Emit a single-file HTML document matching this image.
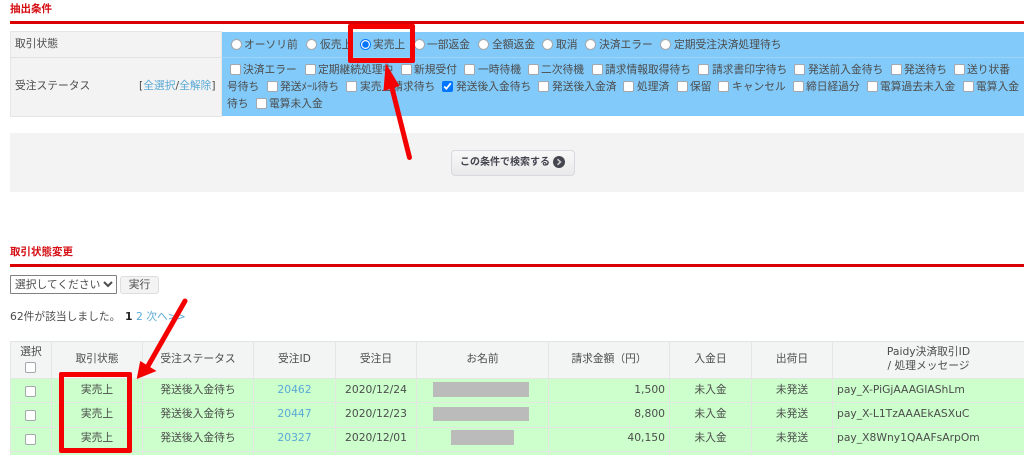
<!DOCTYPE html>
<html lang="ja"><head><meta charset="utf-8"><style>
html,body{margin:0;padding:0;background:#fff}
body{width:1024px;height:455px;overflow:hidden;position:relative;font:10.75px/14px "DejaVu Sans","Noto Sans CJK JP",sans-serif;color:#4c4c4c;filter:blur(.35px)}
div,span,input,select{position:absolute;white-space:nowrap;box-sizing:border-box}
input{margin:0;width:11px;height:11px;transform:translate(1px,1px)}
input:not(:checked){appearance:none;-webkit-appearance:none;background:#fff;border:1px solid #a4a8ac;border-radius:2px}
input[type=radio]:not(:checked){border-radius:50%}
a{color:#5aa9d6;text-decoration:none}
.h{left:10px;color:#d40d12;font-weight:bold;font-size:10.5px}
.l{left:10px;right:0;height:3px;background:#d80000}
.c{text-align:center}
.g{background:#bbb}
.v{background:#e4e6e4;width:1px;top:341px;height:114px}
.r{left:10px;right:0;height:1px;background:#e3e8e3}
</style></head><body>
<div class="h" style="top:2px">抽出条件</div>
<div class="l" style="top:21px"></div>

<div style="left:10px;top:31px;width:212px;height:86px;background:#f3f3f3;border:1px solid #e6e6e6"></div>
<div style="left:10px;top:57px;width:212px;height:1px;background:#e2e2e2"></div>
<div style="left:222px;top:32px;right:0;height:84px;background:#82caf9"></div>
<div style="left:222px;top:57px;right:0;height:1px;background:#9ed4f8"></div>
<span style="left:15px;top:37px">取引状態</span>
<span style="left:15px;top:79px">受注ステータス</span>
<span style="left:139px;top:79px">[<a>全選択</a>/<a>全解除</a>]</span>

<input type="radio" name="a" style="left:230px;top:38px"><span style="left:244px;top:38px">オーソリ前</span>
<input type="radio" name="a" style="left:305px;top:38px"><span style="left:320px;top:38px">仮売上</span>
<input type="radio" name="a" checked style="left:359px;top:38px"><span style="left:373px;top:38px">実売上</span>
<input type="radio" name="a" style="left:413px;top:38px"><span style="left:427px;top:38px">一部返金</span>
<input type="radio" name="a" style="left:477px;top:38px"><span style="left:492px;top:38px">全額返金</span>
<input type="radio" name="a" style="left:541px;top:38px"><span style="left:556px;top:38px">取消</span>
<input type="radio" name="a" style="left:584px;top:38px"><span style="left:599px;top:38px">決済エラー</span>
<input type="radio" name="a" style="left:659px;top:38px"><span style="left:674px;top:38px">定期受注決済処理待ち</span>

<input type="checkbox" style="left:229px;top:63px"><span style="left:243px;top:63px">決済エラー</span>
<input type="checkbox" style="left:304px;top:63px"><span style="left:318px;top:63px">定期継続処理中</span>
<input type="checkbox" style="left:400px;top:63px"><span style="left:414px;top:63px">新規受付</span>
<input type="checkbox" style="left:463px;top:63px"><span style="left:478px;top:63px">一時待機</span>
<input type="checkbox" style="left:527px;top:63px"><span style="left:541px;top:63px">二次待機</span>
<input type="checkbox" style="left:591px;top:63px"><span style="left:605px;top:63px">請求情報取得待ち</span>
<input type="checkbox" style="left:697px;top:63px"><span style="left:712px;top:63px">請求書印字待ち</span>
<input type="checkbox" style="left:793px;top:63px"><span style="left:808px;top:63px">発送前入金待ち</span>
<input type="checkbox" style="left:890px;top:63px"><span style="left:904px;top:63px">発送待ち</span>
<input type="checkbox" style="left:953px;top:63px"><span style="left:967px;top:63px">送り状番</span>

<span style="left:227px;top:80px">号待ち</span>
<input type="checkbox" style="left:266px;top:80px"><span style="left:280px;top:80px">発送ﾒｰﾙ待ち</span>
<input type="checkbox" style="left:345px;top:80px"><span style="left:360px;top:80px">実売上請求待ち</span>
<input type="checkbox" checked style="left:441px;top:80px"><span style="left:456px;top:80px">発送後入金待ち</span>
<input type="checkbox" style="left:537px;top:80px"><span style="left:552px;top:80px">発送後入金済</span>
<input type="checkbox" style="left:622px;top:80px"><span style="left:637px;top:80px">処理済</span>
<input type="checkbox" style="left:676px;top:80px"><span style="left:690px;top:80px">保留</span>
<input type="checkbox" style="left:717px;top:80px"><span style="left:732px;top:80px">キャンセル</span>
<input type="checkbox" style="left:792px;top:80px"><span style="left:806px;top:80px">締日経過分</span>
<input type="checkbox" style="left:866px;top:80px"><span style="left:880px;top:80px">電算過去未入金</span>
<input type="checkbox" style="left:962px;top:80px"><span style="left:976px;top:80px">電算入金</span>

<span style="left:227px;top:97px">待ち</span>
<input type="checkbox" style="left:255px;top:97px"><span style="left:269px;top:97px">電算未入金</span>

<div style="left:10px;top:133px;right:0;height:59px;background:#f3f3f3"></div>
<div style="left:451px;top:150px;width:124px;height:26px;background:linear-gradient(#f8f8f8,#e9e9e9);border:1px solid #d8d8de;border-radius:4px"></div>
<span style="left:460px;top:155px;font-weight:bold;font-size:10px;color:#44444f;line-height:16px">この条件で検索する</span>
<svg style="position:absolute;left:553px;top:156px" width="12" height="12" viewBox="0 0 12 12"><circle cx="6" cy="6" r="6" fill="#45454f"/><path d="M4.5 3.2 7.5 6 4.5 8.8" fill="none" stroke="#ccc" stroke-width="1.6"/></svg>

<div class="h" style="top:245px">取引状態変更</div>
<div class="l" style="top:264px"></div>
<select style="left:10px;top:275px;width:107px;height:19px;font:10.75px/14px 'DejaVu Sans','Noto Sans CJK JP',sans-serif;color:#4c4c4c;background:#fff;border:1px solid #808080;border-radius:1px;padding:0"><option>選択してください</option></select>
<div class="c" style="left:120px;top:276px;width:39px;height:18px;line-height:16px;background:#f3f3f3;border:1px solid #ddd;border-radius:3px">実行</div>
<span style="left:10px;top:310px">62件が該当しました。</span>
<span style="left:125px;top:310px;font-weight:bold;color:#222">1</span>
<span style="left:136px;top:310px"><a>2 次へ&gt;&gt;</a></span>

<div style="left:10px;top:341px;right:0;height:37px;background:#f3f5f5"></div>
<div style="left:10px;top:378px;right:0;height:77px;background:#ccffcc"></div>
<div class="r" style="top:341px;background:#e2e4e2"></div>
<div class="r" style="top:378px"></div>
<div class="r" style="top:402px"></div>
<div class="r" style="top:427px"></div>
<div class="r" style="top:451px"></div>
<div class="v" style="left:10px"></div>
<div class="v" style="left:51px"></div>
<div class="v" style="left:142px"></div>
<div class="v" style="left:253px"></div>
<div class="v" style="left:335px"></div>
<div class="v" style="left:416px"></div>
<div class="v" style="left:548px"></div>
<div class="v" style="left:669px"></div>
<div class="v" style="left:751px"></div>
<div class="v" style="left:832px"></div>

<div class="c" style="left:11px;width:40px;top:345px">選択</div>
<input type="checkbox" style="left:24px;top:361px">
<div class="c" style="left:52px;width:90px;top:352px">取引状態</div>
<div class="c" style="left:143px;width:110px;top:352px">受注ステータス</div>
<div class="c" style="left:254px;width:81px;top:352px">受注ID</div>
<div class="c" style="left:336px;width:80px;top:352px">受注日</div>
<div class="c" style="left:417px;width:131px;top:352px">お名前</div>
<div class="c" style="left:549px;width:120px;top:352px">請求金額（円）</div>
<div class="c" style="left:670px;width:81px;top:352px">入金日</div>
<div class="c" style="left:752px;width:80px;top:352px">出荷日</div>
<div class="c" style="left:833px;width:191px;top:345px">Paidy決済取引ID</div>
<div class="c" style="left:833px;width:191px;top:359px">/ 処理メッセージ</div>

<input type="checkbox" style="left:24px;top:385px">
<div class="c" style="left:52px;width:90px;top:383px">実売上</div>
<div class="c" style="left:143px;width:110px;top:383px">発送後入金待ち</div>
<div class="c" style="left:254px;width:81px;top:383px"><a>20462</a></div>
<div class="c" style="left:336px;width:80px;top:383px">2020/12/24</div>
<div class="g" style="left:433px;top:382px;width:96px;height:15px"></div>
<span style="right:359px;top:383px">1,500</span>
<div class="c" style="left:670px;width:81px;top:383px">未入金</div>
<div class="c" style="left:752px;width:80px;top:383px">未発送</div>
<span style="left:837px;top:383px">pay_X-PiGjAAAGIAShLm</span>

<input type="checkbox" style="left:24px;top:409px">
<div class="c" style="left:52px;width:90px;top:407px">実売上</div>
<div class="c" style="left:143px;width:110px;top:407px">発送後入金待ち</div>
<div class="c" style="left:254px;width:81px;top:407px"><a>20447</a></div>
<div class="c" style="left:336px;width:80px;top:407px">2020/12/23</div>
<div class="g" style="left:433px;top:407px;width:96px;height:14px"></div>
<span style="right:359px;top:407px">8,800</span>
<div class="c" style="left:670px;width:81px;top:407px">未入金</div>
<div class="c" style="left:752px;width:80px;top:407px">未発送</div>
<span style="left:837px;top:407px">pay_X-L1TzAAAEkASXuC</span>

<input type="checkbox" style="left:24px;top:433px">
<div class="c" style="left:52px;width:90px;top:431px">実売上</div>
<div class="c" style="left:143px;width:110px;top:431px">発送後入金待ち</div>
<div class="c" style="left:254px;width:81px;top:431px"><a>20327</a></div>
<div class="c" style="left:336px;width:80px;top:431px">2020/12/01</div>
<div class="g" style="left:451px;top:430px;width:63px;height:15px"></div>
<span style="right:359px;top:431px">40,150</span>
<div class="c" style="left:670px;width:81px;top:431px">未入金</div>
<div class="c" style="left:752px;width:80px;top:431px">未発送</div>
<span style="left:837px;top:431px">pay_X8Wny1QAAFsArpOm</span>

<div style="left:348px;top:24px;width:67px;height:39px;border:5.5px solid #f40000;border-radius:2px"></div>
<div style="left:59px;top:372px;width:73px;height:81px;border:5px solid #f40000;border-radius:2px"></div>
<svg style="position:absolute;left:0;top:0" width="1024" height="455" viewBox="0 0 1024 455">
<path d="M409.5 157.5 392 88" fill="none" stroke="#f40000" stroke-width="5" stroke-linecap="round"/>
<path d="M385.7 63 383.5 91 399.5 86Z" fill="#f40000"/>
<path d="M185 301 148 366" fill="none" stroke="#f40000" stroke-width="5" stroke-linecap="round"/>
<path d="M136.7 379 140.2 361 156.5 371Z" fill="#f40000"/>
</svg>
</body></html>
